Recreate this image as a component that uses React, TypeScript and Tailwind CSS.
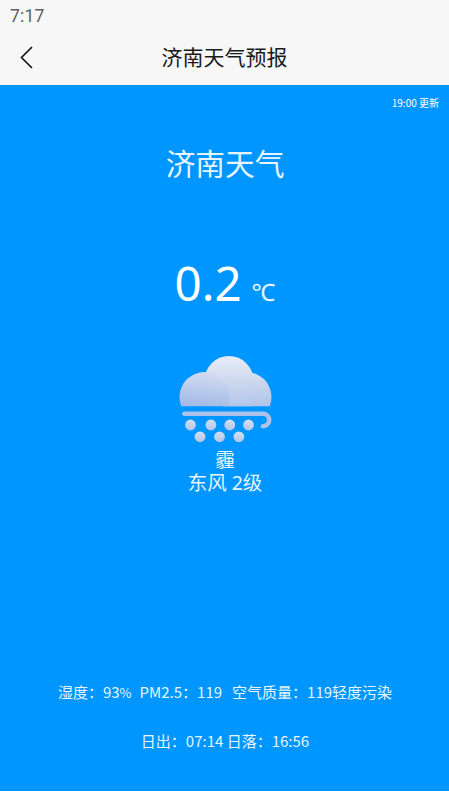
import React from 'react';

function HazeIcon({ className }: { className?: string }) {
  return (
    <svg viewBox="0 0 94 88" className={className} fill="none">
      <defs>
        <linearGradient id="cloud-back" x1="45" y1="1" x2="45" y2="51" gradientUnits="userSpaceOnUse">
          <stop offset="0" stopColor="#e8ecf6" />
          <stop offset="1" stopColor="#b4c5e8" />
        </linearGradient>
        <linearGradient id="cloud-left" x1="28" y1="17" x2="24" y2="51" gradientUnits="userSpaceOnUse">
          <stop offset="0" stopColor="#d3dcf0" />
          <stop offset="1" stopColor="#a3bbe6" />
        </linearGradient>
        <linearGradient id="cloud-right" x1="62" y1="18" x2="66" y2="51" gradientUnits="userSpaceOnUse">
          <stop offset="0" stopColor="#d9e0f1" />
          <stop offset="1" stopColor="#b3c5ea" />
        </linearGradient>
        <linearGradient id="drop" x1="0" y1="0" x2="0" y2="1">
          <stop offset="0" stopColor="#d6dff1" />
          <stop offset="1" stopColor="#b3c5e9" />
        </linearGradient>
        <clipPath id="cloud-base">
          <path d="M0 0h94v51.300H0Z" />
        </clipPath>
      </defs>
      <g clipPath="url(#cloud-base)">
        <circle cx="68.500" cy="42" r="25" fill="url(#cloud-right)" />
        <circle cx="51" cy="25.500" r="24.500" fill="url(#cloud-back)" />
        <path d="M45 40h30v12H45Z" fill="url(#cloud-right)" />
        <circle cx="26.500" cy="42" r="25" fill="url(#cloud-left)" />
      </g>
      <path
        d="M6.300 58.800H85a6.200 6.200 0 0 1 0 12.400"
        stroke="#adc1ea"
        strokeWidth="4.600"
        strokeLinecap="round"
      />
      <g fill="url(#drop)">
        <circle cx="12.500" cy="70" r="5.400" />
        <circle cx="32.900" cy="70" r="5.400" />
        <circle cx="51.800" cy="70" r="5.400" />
        <circle cx="70.500" cy="70" r="5.400" />
        <circle cx="22" cy="81.800" r="5.400" />
        <circle cx="41.500" cy="81.800" r="5.400" />
        <circle cx="60.900" cy="81.800" r="5.400" />
      </g>
    </svg>
  );
}

function Header() {
  return (
    <header className="h-[85px] bg-[#f7f7f7]">
      <div className="h-[29px] pl-[10px] pt-[3px] font-[Roboto,sans-serif] text-[17.500px] leading-[26px] tracking-[0.2px] text-[#606060]">
        7:17
      </div>
      <div className="grid h-[55px] grid-cols-[60px_1fr_60px] items-center">
        <button className="pl-5" aria-label="返回">
          <svg viewBox="0 0 14 24" className="h-6 w-[14px]" fill="none" stroke="#111" strokeWidth="1.600">
            <path d="M12 2 1.500 12.500 12 23" />
          </svg>
        </button>
        <h1 className="text-center text-[21px] leading-[30px] text-[#1a1a1a]">济南天气预报</h1>
      </div>
    </header>
  );
}

export default function App() {
  return (
    <div className="h-[799px] w-[449px] overflow-hidden bg-white font-['Noto_Sans','Noto_Sans_CJK_SC',sans-serif]">
      <Header />
      <main className="flex h-[706px] flex-col items-center bg-[#0096ff] text-white">
        <p className="mt-[10px] self-end pr-[10px] font-['Noto_Sans_CJK_SC',sans-serif] text-[10px] leading-[15px]">
          19:00 更新
        </p>
        <h2 className="mt-[32px] pl-px text-[29.700px] leading-[44px] text-[#e6f5ff]">济南天气</h2>
        <div className="mt-[64px] flex items-baseline gap-[10px] pl-px leading-[66px]">
          <span className="text-[47.500px]">0.2</span>
          <span className="text-[24px] leading-[24px] text-[#e6f5ff]">℃</span>
        </div>
        <HazeIcon className="mt-[39px] h-[88px] w-[94px]" />
        <p className="mt-[5px] pl-px text-[19.500px] leading-[23px] text-[#e6f5ff]">霾</p>
        <p className="pl-px text-[19.500px] leading-[23px] text-[#e6f5ff]">东风 2级</p>
        <div className="mt-[186px] flex flex-col items-center gap-[24px] pl-px font-['Noto_Sans_CJK_SC',sans-serif] text-[15px] leading-[24px] text-[#e6f5ff]">
          <p className="flex gap-[8px]">
            <span>
              湿度：93<span className="text-[13px]">%</span>
            </span>
            <span>PM2.5：119</span>
            <span className="pl-[2px]">空气质量：119轻度污染</span>
          </p>
          <p>日出：07:14 日落：16:56</p>
        </div>
      </main>
    </div>
  );
}
